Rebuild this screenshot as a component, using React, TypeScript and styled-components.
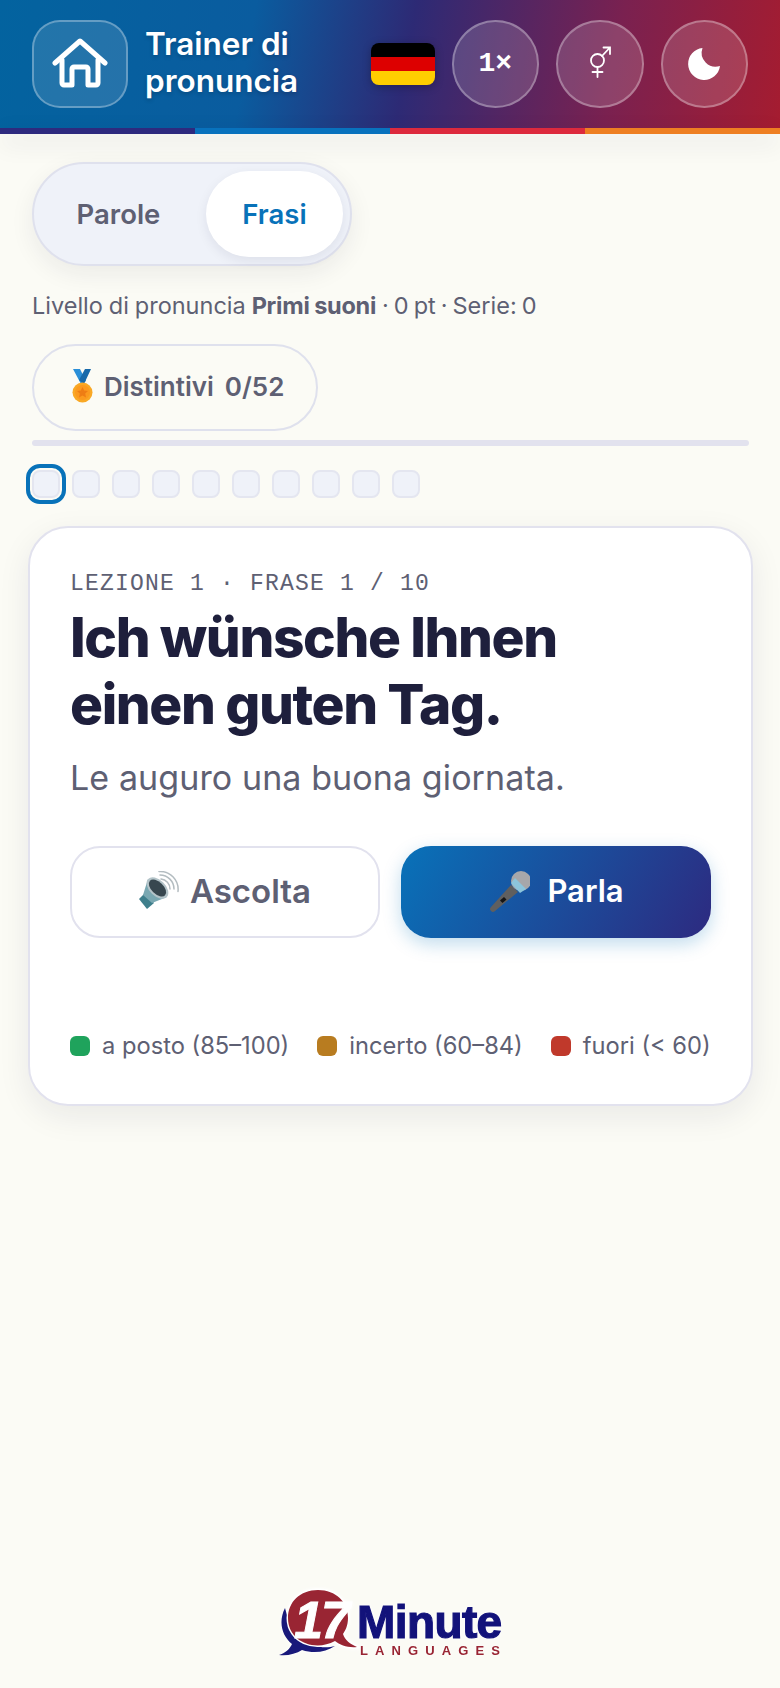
import styled, { createGlobalStyle } from 'styled-components';

const GlobalStyle = createGlobalStyle`
  html, body {
    margin: 0;
    padding: 0;
    background: #fbfbf5;
  }
  * {
    box-sizing: border-box;
  }
`;

const HouseIcon = () => (
  <svg width="56" height="56" viewBox="0 0 56 56" fill="none" stroke="#fff" strokeWidth="5" strokeLinecap="round" strokeLinejoin="round">
    <path d="M3 27 L28 5 L53 27" />
    <path d="M10 24 V47 a2 2 0 0 0 2 2 H20 V33 a2 2 0 0 1 2 -2 H34 a2 2 0 0 1 2 2 V49 H44 a2 2 0 0 0 2 -2 V24" />
  </svg>
);

const GenderIcon = () => (
  <GenderSvg width="22" height="32" viewBox="0 0 22 32" fill="none" stroke="#fff" strokeWidth="1.8" strokeLinecap="round">
    <circle cx="8.5" cy="14.5" r="6.5" />
    <path d="M8.5 21 V31 M3.5 26 H13.5 M13 10 L20.5 2 M14.5 1.5 H21 V8" />
  </GenderSvg>
);

const MoonIcon = () => (
  <svg width="34" height="34" viewBox="0 0 34 34">
    <path d="M15.5 1 A16 16 0 1 0 33 19 A14 14 0 0 1 15.5 1 Z" fill="#fff" />
  </svg>
);

const MedalIcon = () => (
  <svg width="22" height="34" viewBox="0 0 22 34">
    <path d="M1 0 H8 L14 12 L9 15 Z" fill="#2a8fd8" />
    <path d="M19 0 H13 L7 11 L12 15 Z" fill="#1769aa" />
    <circle cx="10.5" cy="23.5" r="10" fill="#f9a825" />
    <circle cx="10.5" cy="23.5" r="7.5" fill="#fb9a1e" />
    <path d="M10.5 18 l1.7 3.5 3.8 .5 -2.8 2.6 .8 3.8 -3.5 -1.9 -3.5 1.9 .8 -3.8 -2.8 -2.6 3.8 -.5 Z" fill="#ee7d14" />
  </svg>
);

const SpeakerIcon = () => (
  <svg width="46" height="40" viewBox="10 10 46 40" fill="none">
    <path d="M10 38 L16 32 L25 42 L18 48 Z" fill="#3f7f8c" />
    <path d="M14 34 L19 18 L38 36 L23 42 Z" fill="#7aa8b2" />
    <ellipse cx="28.5" cy="27" rx="13" ry="8" transform="rotate(44 28.5 27)" fill="#b4c4c9" />
    <ellipse cx="28.5" cy="27" rx="10.5" ry="6" transform="rotate(44 28.5 27)" fill="#37474f" />
    <path d="M32 18 a10 10 0 0 1 9 10 M31 14 a14 14 0 0 1 14 14 M30 10.5 a18 18 0 0 1 19 20" stroke="#b3bcc0" strokeWidth="1.5" strokeLinecap="round" />
  </svg>
);

const MicIcon = () => (
  <svg width="42" height="44" viewBox="8 5 42 44" fill="none">
    <path d="M31 21 L38 28 L15 47 a2.8 2.8 0 0 1 -4 -4 Z" fill="#5f5f5f" />
    <path d="M24 33 l2.5 2.5 -4 3.5 -2.5 -2.5 Z" fill="#151515" />
    <circle cx="41" cy="17" r="10" fill="#a7a7aa" />
    <path d="M31 19 L35 14 L46 25 L40 29 Z" fill="#8cc5dc" />
  </svg>
);

const Logo = () => (
  <LogoSvg width="240" height="84" viewBox="0 0 240 84">
    <path d="M15 28 C8 42 12 56 22 64 C20 69 15 73 9 75 C17 76 26 74 32 70 C44 74 56 72 65 66 C50 70 24 66 15 28 Z" fill="#19197a" />
    <path d="M48 10 C66 10 78 22 78 38 C78 46 75 51 73 54 C75 60 80 64 87 67 C78 68 70 65 65 61 C45 72 18 62 18 38 C18 22 30 10 48 10 Z" fill="#992533" stroke="#fff" strokeWidth="3" paintOrder="stroke" />
    <LogoSeventeen x="24" y="58">17</LogoSeventeen>
    <LogoMinute x="87" y="58">Minute</LogoMinute>
    <LogoLanguages x="90" y="75">LANGUAGES</LogoLanguages>
  </LogoSvg>
);

const App = () => (
  <Page>
    <GlobalStyle />
    <HeaderBar>
      <HomeButton>
        <HouseIcon />
      </HomeButton>
      <HeaderTitle>
        Trainer di
        <br />
        pronuncia
      </HeaderTitle>
      <Flag>
        <FlagBand color="#000" />
        <FlagBand color="#dd0000" />
        <FlagBand color="#ffce00" />
      </Flag>
      <SpeedButton>1×</SpeedButton>
      <RoundButton>
        <GenderIcon />
      </RoundButton>
      <RoundButton>
        <MoonIcon />
      </RoundButton>
    </HeaderBar>
    <Stripe>
      <StripePart color="#2e2a7e" />
      <StripePart color="#0872bd" />
      <StripePart color="#dd2a3d" />
      <StripePart color="#ee7f22" />
    </Stripe>

    <Content>
      <ModeToggle>
        <ModeOption>Parole</ModeOption>
        <ModeOption active>Frasi</ModeOption>
      </ModeToggle>

      <LevelLine>
        Livello di pronuncia <strong>Primi suoni</strong> <LevelTail>· 0 pt · Serie: 0</LevelTail>
      </LevelLine>

      <BadgePill>
        <MedalIcon />
        <span>Distintivi</span>
        <BadgeCount>0/52</BadgeCount>
      </BadgePill>

      <ProgressTrack />

      <Dots>
        {Array.from({ length: 10 }).map((_, i) => (
          <Dot key={i} current={i === 0} />
        ))}
      </Dots>

      <Card>
        <Eyebrow>LEZIONE 1 · FRASE 1 / 10</Eyebrow>
        <Sentence>
          Ich wünsche Ihnen
          <br />
          einen guten Tag.
        </Sentence>
        <Translation>Le auguro una buona giornata.</Translation>
        <Actions>
          <ListenButton>
            <SpeakerIcon />
            Ascolta
          </ListenButton>
          <SpeakButton>
            <MicIcon />
            Parla
          </SpeakButton>
        </Actions>
        <Legend>
          <LegendItem>
            <Swatch color="#1fa35c" />a posto (85–100)
          </LegendItem>
          <LegendItem>
            <Swatch color="#b87c20" />incerto (60–84)
          </LegendItem>
          <LegendItem>
            <Swatch color="#c0392b" />fuori (&lt; 60)
          </LegendItem>
        </Legend>
      </Card>
    </Content>

    <Footer>
      <Logo />
    </Footer>
  </Page>
);

export default App;

const Page = styled.div`
  width: 780px;
  height: 1688px;
  display: flex;
  flex-direction: column;
  background: #fbfbf5;
  font-family: Inter, 'Liberation Sans', sans-serif;
  color: #5e6073;
  overflow: hidden;
`;

const HeaderBar = styled.header`
  height: 128px;
  padding: 20px 32px 0;
  display: flex;
  align-items: flex-start;
  gap: 17px;
  background: linear-gradient(100deg, #03639f 0%, #0a5c9f 32%, #2d2a75 52%, #7a2150 78%, #a51c30 100%);
`;

const HomeButton = styled.button`
  width: 96px;
  height: 87.5px;
  flex: none;
  display: flex;
  align-items: center;
  justify-content: center;
  padding: 0;
  border: 2px solid rgba(255, 255, 255, 0.3);
  border-radius: 28px;
  background: rgba(255, 255, 255, 0.12);
`;

const HeaderTitle = styled.h1`
  flex: 1;
  margin: 5px 0 0;
  font-size: 31.5px;
  line-height: 37px;
  font-weight: 600;
  color: #fff;
  text-shadow: 0 2px 4px rgba(0, 0, 0, 0.2);
`;

const Flag = styled.div`
  width: 64px;
  height: 42px;
  margin-top: 23px;
  flex: none;
  display: flex;
  flex-direction: column;
  border-radius: 8px;
  overflow: hidden;
  box-shadow: 0 2px 8px rgba(0, 0, 0, 0.25);
`;

const FlagBand = styled.div<{ color: string }>`
  flex: 1;
  background: ${({ color }) => color};
`;

const RoundButton = styled.button`
  width: 87.5px;
  height: 87.5px;
  flex: none;
  display: flex;
  align-items: center;
  justify-content: center;
  padding: 0;
  border: 2px solid rgba(255, 255, 255, 0.3);
  border-radius: 50%;
  background: rgba(255, 255, 255, 0.15);
`;

const SpeedButton = styled(RoundButton)`
  color: #fff;
  font-family: 'Liberation Mono', monospace;
  font-size: 28px;
  font-weight: 700;
`;

const GenderSvg = styled.svg`
  margin-bottom: 3px;
`;

const Stripe = styled.div`
  height: 6px;
  flex: none;
  display: flex;
  box-shadow: 0 8px 24px rgba(30, 30, 60, 0.14);
`;

const StripePart = styled.div<{ color: string }>`
  flex: 1;
  background: ${({ color }) => color};
`;

const Content = styled.main`
  flex: 1;
  padding: 28px 32px 0;
  display: flex;
  flex-direction: column;
  align-items: flex-start;
`;

const ModeToggle = styled.div`
  width: 320px;
  height: 104px;
  padding: 7px;
  display: flex;
  align-items: stretch;
  border: 2px solid #dfe1ed;
  border-radius: 52px;
  background: #eff2f9;
  box-shadow: 0 8px 24px rgba(30, 30, 60, 0.07);
`;

const ModeOption = styled.div<{ active?: boolean }>`
  width: ${({ active }) => (active ? '139px' : '167px')};
  padding-right: ${({ active }) => (active ? '0' : '10px')};
  display: flex;
  align-items: center;
  justify-content: center;
  border-radius: 44px;
  font-size: 27.5px;
  font-weight: 600;
  color: ${({ active }) => (active ? '#0872b9' : '#5e6073')};
  background: ${({ active }) => (active ? '#fff' : 'transparent')};
  box-shadow: ${({ active }) => (active ? '0 4px 12px rgba(30,30,60,0.08)' : 'none')};
`;

const LevelLine = styled.p`
  margin: 24px 0 0;
  font-size: 23.5px;
  line-height: 32px;
  word-spacing: -0.7px;
  strong {
    font-weight: 700;
    letter-spacing: -0.25px;
  }
`;

const LevelTail = styled.span`
  word-spacing: -1.6px;
`;

const BadgePill = styled.div`
  width: 286px;
  height: 87px;
  margin-top: 22px;
  padding: 0 0 3px 38px;
  display: flex;
  align-items: center;
  gap: 10px;
  border: 2px solid #dfe1ed;
  border-radius: 44px;
  font-size: 26px;
  font-weight: 600;
`;

const BadgeCount = styled.span`
  margin-left: 1px;
`;

const ProgressTrack = styled.div`
  width: 717px;
  height: 6px;
  margin-top: 9px;
  border-radius: 3px;
  background: #e2e2ee;
`;

const Dots = styled.div`
  margin-top: 24px;
  display: flex;
  gap: 12px;
`;

const Dot = styled.div<{ current?: boolean }>`
  width: 28px;
  height: 28px;
  border: 2px solid #e4e6f0;
  border-radius: 8px;
  background: #eff2f9;
  outline: ${({ current }) => (current ? '4px solid #0872b9' : 'none')};
  outline-offset: 2px;
`;

const Card = styled.section`
  width: 725px;
  height: 580px;
  margin: 28px 0 0 -4px;
  padding: 42px 40px 0;
  display: flex;
  flex-direction: column;
  border: 2px solid #e2e2ee;
  border-radius: 40px;
  background: #fff;
  box-shadow: 0 10px 32px rgba(30, 30, 60, 0.08);
`;

const Eyebrow = styled.div`
  font-family: 'Liberation Mono', monospace;
  font-size: 23px;
  line-height: 28px;
  letter-spacing: 1.2px;
`;

const Sentence = styled.h2`
  margin: 6px 0 0;
  font-size: 55px;
  line-height: 67px;
  font-weight: 800;
  letter-spacing: -1.4px;
  color: #1e1f3c;
`;

const Translation = styled.p`
  margin: 18px 0 0;
  font-size: 34px;
  line-height: 44px;
  letter-spacing: 0.1px;
`;

const Actions = styled.div`
  margin-top: 46px;
  display: grid;
  grid-template-columns: 310px 310px;
  gap: 21px;
`;

const ListenButton = styled.button`
  height: 92px;
  padding: 0 0 3px;
  display: flex;
  align-items: center;
  justify-content: center;
  gap: 5px;
  border: 2px solid #e2e2ee;
  border-radius: 30px;
  background: #fff;
  color: #5e6073;
  font-family: Inter, sans-serif;
  font-size: 33px;
  font-weight: 600;
`;

const SpeakButton = styled(ListenButton)`
  border: none;
  background: linear-gradient(120deg, #0872b9, #2d2a80);
  color: #fff;
  font-size: 31px;
  gap: 17px;
  box-shadow: 0 6px 18px rgba(8, 114, 185, 0.25);
`;

const Legend = styled.div`
  margin-top: 93px;
  display: flex;
  gap: 28px;
  white-space: nowrap;
`;

const LegendItem = styled.div`
  display: flex;
  align-items: center;
  gap: 12px;
  font-size: 23.7px;
  line-height: 30px;
`;

const Swatch = styled.span<{ color: string }>`
  width: 20px;
  height: 20px;
  border-radius: 6px;
  background: ${({ color }) => color};
`;

const Footer = styled.footer`
  display: flex;
  justify-content: center;
  padding-bottom: 24px;
`;

const LogoSvg = styled.svg`
  filter: drop-shadow(0 0 2px #fff);
`;

const LogoSeventeen = styled.text`
  font-family: 'Liberation Sans', sans-serif;
  font-size: 52px;
  font-weight: 700;
  font-style: italic;
  fill: #fff;
  stroke: #fff;
  stroke-width: 1px;
  letter-spacing: -2px;
`;

const LogoMinute = styled.text`
  font-family: 'Liberation Sans', sans-serif;
  font-size: 46px;
  font-weight: 700;
  fill: #12127a;
  stroke: #12127a;
  stroke-width: 1.2px;
  letter-spacing: -0.6px;
`;

const LogoLanguages = styled.text`
  font-family: 'Liberation Sans', sans-serif;
  font-size: 13px;
  font-weight: 700;
  fill: #992533;
  letter-spacing: 7.1px;
`;
